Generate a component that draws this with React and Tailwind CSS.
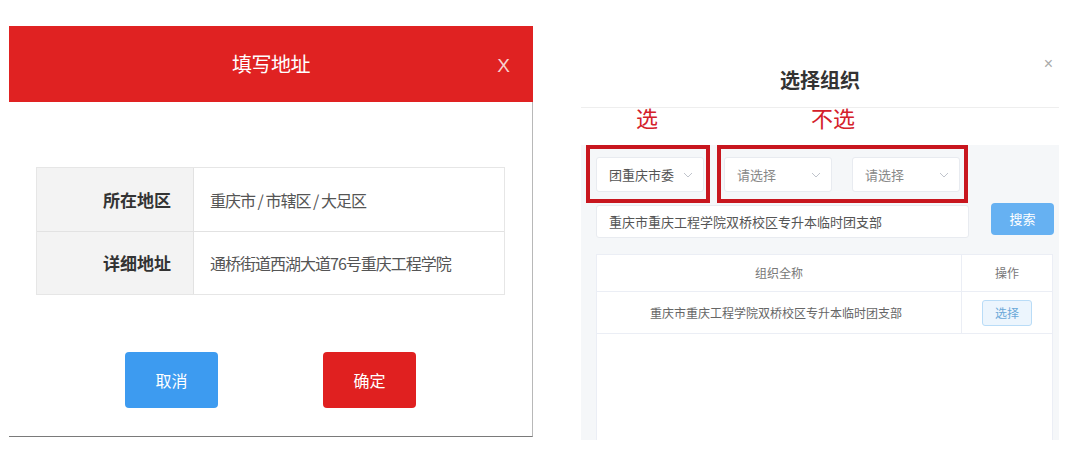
import React from 'react';

const cjk = { fontFamily: '"Noto Sans CJK SC", "Noto Sans", sans-serif' };

// Left dialog: red header + address table + two buttons
const AddressDialog = () => {
  const rows = [
    { label: '所在地区', value: '重庆市 / 市辖区 / 大足区' },
    { label: '详细地址', value: '通桥街道西湖大道76号重庆工程学院' }
  ];

  return (
    <div className="pt-[26px] pl-[9px]">
      <div className="w-[524px]">
        <div className="relative h-[76px] bg-[#e02222] flex items-center justify-center">
          <span className="text-[20px] text-white tracking-[-0.5px]">填写地址</span>
          <span
            className="absolute right-[23px] top-[30px] text-[19px] leading-none text-[#f7d0d0]"
            style={{ fontFamily: '"Liberation Sans", sans-serif' }}
          >
            X
          </span>
        </div>

        <div className="h-[335px] border-r border-b border-r-[#b8b8b8] border-b-[#7a7a7a] pt-[65px]">
          <div className="ml-[27px] w-[469px] border border-[#e6e6e6]">
            {rows.map((row, i) => (
              <div key={row.label} className={`flex h-[63px] ${i > 0 ? 'border-t border-[#e2e2e2]' : ''}`}>
                <div className="w-[157px] bg-[#f3f3f3] border-r border-[#e2e2e2] flex items-center justify-end pr-[22px] text-[17px] font-bold text-[#333]">
                  {row.label}
                </div>
                <div className="flex-1 flex items-center pl-[16px] text-[16px] text-[#555] tracking-[-1px]">
                  {row.value}
                </div>
              </div>
            ))}
          </div>

          <div className="flex mt-[57px] pl-[116px] gap-[105px]">
            <button className="w-[93px] h-[56px] rounded-[4px] bg-[#3d9bf0] text-white text-[16px]">取消</button>
            <button className="w-[93px] h-[56px] rounded-[4px] bg-[#e02020] text-white text-[16px]">确定</button>
          </div>
        </div>
      </div>
    </div>
  );
};

const Select = ({ text, placeholder }) => (
  <div className="w-[108px] h-[35px] bg-white border border-[#e8ebf0] rounded-[3px] flex items-center justify-between pl-[12px] pr-[10px]">
    <span className={`text-[13px] ${placeholder ? 'text-[#888]' : 'text-[#555]'}`}>{text}</span>
    <svg width="10" height="6" viewBox="0 0 10 6" fill="none">
      <path d="M1 1l4 4 4-4" stroke="#c0c4cc" strokeWidth="1" />
    </svg>
  </div>
);

// Right dialog: choose organisation, with red annotation boxes
const OrgDialog = () => (
  <div className="ml-[48px] w-[478px]">
    <div className="relative h-[108px] border-b border-[#eeeeee] flex justify-center pt-[66px]">
      <span className="text-[20px] font-bold text-[#333] leading-[28px]">选择组织</span>
      <span className="absolute right-[6px] top-[52px] text-[16px] text-[#aaa]" style={{ fontFamily: '"Liberation Sans", sans-serif' }}>
        ×
      </span>
    </div>

    <div className="h-[37px] flex items-start text-[22px] leading-[26px] text-[#d4202a] -mt-[4px] mb-[4px]">
      <span className="ml-[55px]">选</span>
      <span className="ml-[153px]">不选</span>
    </div>

    <div className="h-[295px] bg-[#f5f7f9]">
      <div className="flex">
        <div className="ml-[5px] w-[124px] h-[58px] border-4 border-[#c8161e] pl-[6px] pt-[8px]">
          <Select text="团重庆市委" />
        </div>
        <div className="ml-[7px] w-[251px] h-[58px] border-4 border-[#c8161e] pl-[3px] pt-[8px] flex gap-[20px]">
          <Select text="请选择" placeholder />
          <Select text="请选择" placeholder />
        </div>
      </div>

      <div className="flex items-start">
        <div className="ml-[15px] mt-[2px] w-[373px] h-[33px] bg-white border border-[#e8ebf0] rounded-[3px] flex items-center pl-[12px] text-[13px] text-[#555]">
          重庆市重庆工程学院双桥校区专升本临时团支部
        </div>
        <button className="ml-[22px] w-[63px] h-[32px] rounded-[4px] bg-[#66b1f2] text-white text-[13px]">搜索</button>
      </div>

      <div className="ml-[15px] mt-[16px] w-[457px] h-[186px] bg-white border border-b-0 border-[#ebeef5]">
        <div className="flex h-[37px] border-b border-[#ebeef5] text-[12px] text-[#777]">
          <div className="w-[365px] border-r border-[#ebeef5] flex items-center justify-center">组织全称</div>
          <div className="flex-1 flex items-center justify-center">操作</div>
        </div>
        <div className="flex h-[42px] border-b border-[#ebeef5] text-[12px] text-[#666]">
          <div className="w-[365px] border-r border-[#ebeef5] flex items-center justify-center pr-[6px]">
            重庆市重庆工程学院双桥校区专升本临时团支部
          </div>
          <div className="flex-1 flex items-center justify-center">
            <button className="w-[50px] h-[26px] rounded-[3px] bg-[#ecf5fd] border border-[#b9dcf7] text-[12px] text-[#6aa8d8]">选择</button>
          </div>
        </div>
      </div>
    </div>
  </div>
);

const App = () => (
  <div className="w-[1080px] h-[462px] bg-white flex overflow-hidden" style={cjk}>
    <AddressDialog />
    <OrgDialog />
  </div>
);

export default App;
